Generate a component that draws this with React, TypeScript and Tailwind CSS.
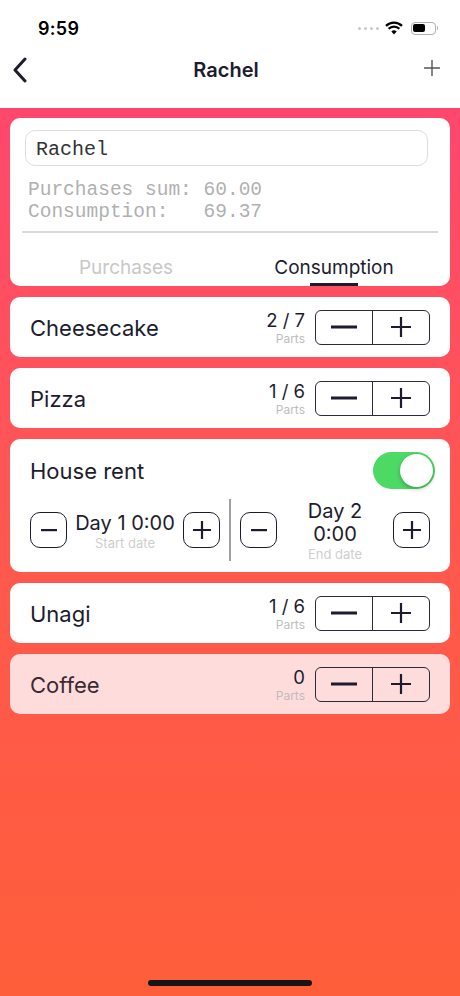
import React from "react";

const Minus = () => (
  <svg width="26" height="4" viewBox="0 0 26 4"><rect x="0" y="0.5" width="26" height="3" fill="#1c1c2e" /></svg>
);
const Plus = () => (
  <svg width="22" height="22" viewBox="0 0 22 22"><path d="M11 1V21M1 11H21" stroke="#1c1c2e" strokeWidth="2.2" /></svg>
);

function Stepper() {
  return (
    <div className="flex h-[35px] w-[115px] rounded-[6px] border-[1.5px] border-[#2a2a3a]">
      <div className="flex flex-1 items-center justify-center border-r-[1.5px] border-[#2a2a3a]"><Minus /></div>
      <div className="flex flex-1 items-center justify-center"><Plus /></div>
    </div>
  );
}

function ItemCard({ name, count, faded }: { name: string; count: string; faded?: boolean }) {
  return (
    <div className={`flex h-[60px] items-center rounded-[10px] pl-[20px] pr-[20px] ${faded ? "bg-[#ffdcdc]" : "bg-white"}`}>
      <div className={`flex-1 pt-[2px] text-[22px] ${faded ? "text-[#3a2a30]" : "text-[#1c1c2e]"}`}>{name}</div>
      <div className="mr-[10px] flex flex-col items-end pt-[1px]">
        <div className="text-[18.5px] leading-[22px] text-[#1c1c2e]">{count}</div>
        <div className="text-[12px] leading-[16px] text-[#bdbdbd]">Parts</div>
      </div>
      <Stepper />
    </div>
  );
}

const SqBtn = ({ kind }: { kind: "minus" | "plus" }) => (
  <div className="flex h-[36px] w-[37px] items-center justify-center rounded-[10px] border-[1.5px] border-[#1c1c2e]">
    {kind === "minus" ? (
      <svg width="16" height="4" viewBox="0 0 16 4"><rect x="0" y="1" width="16" height="2.2" fill="#1c1c2e" /></svg>
    ) : (
      <svg width="20" height="20" viewBox="0 0 20 20"><path d="M10 1V19M1 10H19" stroke="#1c1c2e" strokeWidth="2.2" /></svg>
    )}
  </div>
);

export default function App() {
  return (
    <div className="flex h-[996px] w-[460px] flex-col overflow-hidden font-['Inter',sans-serif]">
      <div className="h-[108px] bg-white">
        <div className="flex h-[56px] items-center pl-[38px] pr-[22px]">
          <div className="flex-1 text-[18px] font-semibold tracking-[0.3px] text-black">9:59</div>
          <div className="mr-[6px] flex items-center gap-[3px]">
            {[0, 1, 2, 3].map((i) => (
              <div key={i} className="h-[3px] w-[3px] rounded-full bg-[#c8c8c8]" />
            ))}
          </div>
          <svg width="18" height="14" viewBox="0 0 18 14" className="mr-[8px]">
            <path d="M9 13.5L6.3 10.6A3.8 3.8 0 0 1 11.7 10.6Z" fill="#000" />
            <path d="M3.6 7.8A7.6 7.6 0 0 1 14.4 7.8" stroke="#000" strokeWidth="2.2" fill="none" />
            <path d="M1 4.9A11.4 11.4 0 0 1 17 4.9" stroke="#000" strokeWidth="2.2" fill="none" />
          </svg>
          <div className="flex items-center">
            <div className="flex h-[13px] w-[25px] items-center rounded-[4px] border border-[#b0b0b0] p-[1.5px]">
              <div className="h-full w-[12px] rounded-[2px] bg-black" />
            </div>
            <div className="ml-[1px] h-[4px] w-[1.5px] rounded-r bg-[#b0b0b0]" />
          </div>
        </div>
        <div className="flex h-[28px] items-center px-[12px]">
          <svg width="16" height="26" viewBox="0 0 16 26">
            <path d="M13 2L3 13L13 24" stroke="#1c1c2e" strokeWidth="3" fill="none" strokeLinecap="round" strokeLinejoin="round" />
          </svg>
          <div className="flex-1 text-center text-[20px] font-semibold text-[#1c1c2e]">Rachel</div>
          <svg width="16" height="16" viewBox="0 0 16 16" className="mr-[8px] mt-[-4px]">
            <path d="M8 0V16M0 8H16" stroke="#555" strokeWidth="1.4" />
          </svg>
        </div>
      </div>

      <div className="flex flex-1 flex-col gap-[11px] bg-gradient-to-b from-[#ff476d] via-[#ff584e] to-[#ff5e3a] px-[10px] pt-[10px]">
        <div className="flex h-[168px] flex-col rounded-[10px] bg-white px-[12px] pt-[12px]">
          <div className="ml-[3px] flex h-[36px] w-[403px] items-center rounded-[10px] border border-[#dddddd] pl-[10px] pt-[4px] font-['Liberation_Mono',monospace] text-[20px] text-[#333]">
            Rachel
          </div>
          <div className="mt-[13px] pl-[6px] font-['Liberation_Mono',monospace] text-[19.5px] leading-[22px] text-[#b0b0b0] whitespace-pre">
            <div>Purchases sum: 60.00</div>
            <div>Consumption:   69.37</div>
          </div>
          <div className="mt-[8px] h-[1.5px] bg-[#d9d9d9]" />
          <div className="flex flex-1">
            <div className="flex flex-1 items-end justify-center pb-[4px] text-[19px] text-[#c8c8c8]">Purchases</div>
            <div className="flex flex-1 flex-col items-center">
              <div className="flex flex-1 items-end pb-[1px] text-[19px] text-[#1c1c2e]">Consumption</div>
              <div className="h-[3px] w-[48px] bg-[#1c1c2e]" />
            </div>
          </div>
        </div>

        <ItemCard name="Cheesecake" count="2 / 7" />
        <ItemCard name="Pizza" count="1 / 6" />

        <div className="flex h-[133px] flex-col rounded-[10px] bg-white px-[20px] pt-[13px]">
          <div className="flex items-center">
            <div className="flex-1 pt-[2px] text-[22px] text-[#1c1c2e]">House rent</div>
            <div className="mr-[-5px] flex h-[37px] w-[62px] items-center justify-end rounded-full bg-[#4cd964] pr-[2px]">
              <div className="h-[33px] w-[33px] rounded-full bg-white shadow-[0_2px_4px_rgba(0,0,0,0.25)]" />
            </div>
          </div>
          <div className="mt-[10px] flex h-[62px] items-center">
            <SqBtn kind="minus" />
            <div className="flex flex-1 flex-col items-center pt-[2px]">
              <div className="text-[20px] leading-[24px] text-[#1c1c2e]">Day 1 0:00</div>
              <div className="text-[13px] leading-[16px] text-[#cfcfcf]">Start date</div>
            </div>
            <SqBtn kind="plus" />
            <div className="mx-[9px] h-[62px] w-[2px] bg-[#a0a0a0]" />
            <SqBtn kind="minus" />
            <div className="flex flex-1 flex-col items-center pt-[2px]">
              <div className="text-[20px] leading-[23px] text-[#1c1c2e]">Day 2</div>
              <div className="text-[20px] leading-[23px] text-[#1c1c2e]">0:00</div>
              <div className="text-[13px] leading-[16px] text-[#cfcfcf]">End date</div>
            </div>
            <SqBtn kind="plus" />
          </div>
        </div>

        <ItemCard name="Unagi" count="1 / 6" />
        <ItemCard name="Coffee" count="0" faded />

        <div className="flex-1" />
        <div className="mb-[10px] flex justify-center">
          <div className="h-[6px] w-[164px] rounded-full bg-[#151515]" />
        </div>
      </div>
    </div>
  );
}
